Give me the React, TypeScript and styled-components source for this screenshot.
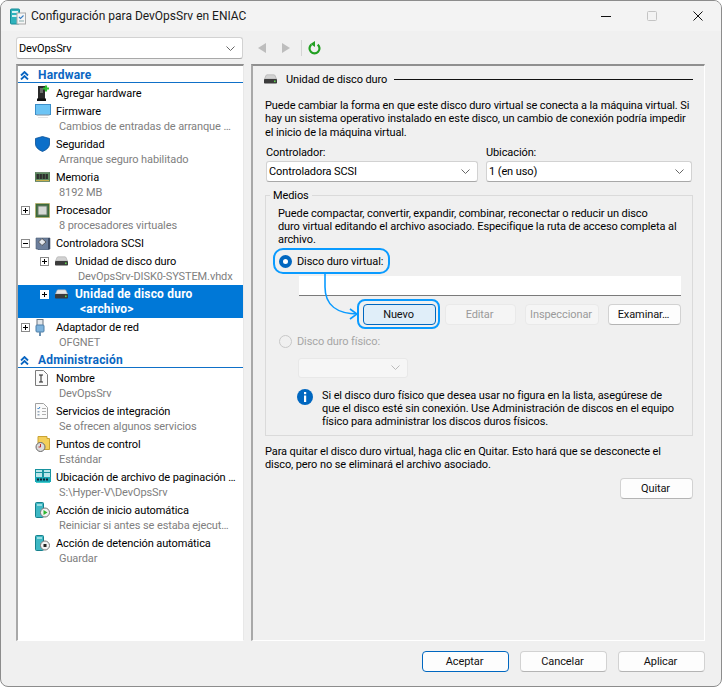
import React from "react";
import styled, { createGlobalStyle } from "styled-components";

const Global = createGlobalStyle`
  html, body { margin: 0; padding: 0; background: #fff; }
  * { box-sizing: border-box; }
  body { font-family: Roboto, "Noto Sans", sans-serif; font-size: 11px; letter-spacing: -0.1px; color: #000; }
`;

const Win = styled.div`
  width: 722px; height: 687px; background: #f0f0f0; border: 1px solid #8c8c8c;
  border-radius: 8px; overflow: hidden; display: flex; flex-direction: column;
`;
const TitleBar = styled.div`
  height: 30px; flex: none; background: #f3f3f3; display: flex; align-items: center; padding-left: 9px;
`;
const TitleText = styled.div` margin-left: 5px; font-size: 12px; letter-spacing: 0; color: #1a1a1a; white-space: nowrap; `;
const WinControls = styled.div` margin-left: auto; display: flex; align-items: center; height: 100%; `;
const WinBtn = styled.div` width: 46px; height: 100%; display: flex; align-items: center; justify-content: center; `;
const Main = styled.div`
  flex: 1; padding: 6px 16px 0 15px; display: grid;
  grid-template-columns: 228px 454px; column-gap: 7px;
  grid-template-rows: 27px 577px auto;
`;
const Combo = styled.div<{ $w?: number; $disabled?: boolean }>`
  height: ${p => p.$disabled ? 20 : 21}px; width: ${p => p.$w ? p.$w + "px" : "100%"};
  background: ${p => p.$disabled ? "#f6f6f6" : "#fff"};
  border: 1px solid ${p => p.$disabled ? "#e8e8e8" : "#d2d2d2"};
  border-bottom-color: ${p => p.$disabled ? "#e8e8e8" : "#a8a8a8"};
  border-radius: 3px; display: flex; align-items: center; justify-content: space-between;
  padding: 0 7px 0 2px; white-space: nowrap;
`;
const TopCombo = styled(Combo)` height: 22px; width: 227px; `;
const Toolbar = styled.div` height: 22px; display: flex; align-items: center; padding-left: 6px; gap: 0; `;
const ToolSep = styled.div` width: 1px; height: 16px; background: #d4d4d4; margin: 0 6px 0 9px; `;
const TreePanel = styled.div`
  background: #fff; border-top: 2px solid #8f8f8f; border-left: 2px solid #a8a8a8;
  border-right: 1px solid #e8e8e8; border-bottom: 1px solid #fff; overflow: hidden;
`;
const SectionHead = styled.div`
  height: 18px; display: flex; align-items: center; padding: 0 0 0 2px; position: relative;
  font-weight: 700; color: #0a66c2; font-size: 12px; letter-spacing: 0.2px;
  &::after { content: ""; position: absolute; left: 0; right: 0; bottom: 1px; height: 1px; background: #0f70c8; }
`;
const SectionLabel = styled.span` margin-left: 9px; `;
const Item = styled.div<{ $selected?: boolean }>`
  background: ${p => p.$selected ? "#0078d7" : "transparent"};
  color: ${p => p.$selected ? "#fff" : "#000"};
  font-weight: ${p => p.$selected ? 700 : 400};
  font-size: ${p => p.$selected ? 12 : 11}px;
  letter-spacing: ${p => p.$selected ? "0.2px" : "-0.1px"};
`;
const ItemTitle = styled.div<{ $level: number }>`
  height: 18px; display: flex; align-items: center; white-space: nowrap;
  padding-left: ${p => p.$level === 2 ? 22 : 3}px;
`;
const ExpanderSlot = styled.div` width: 14px; flex: none; display: flex; align-items: center; `;
const Expander = styled.div<{ $selected?: boolean }>`
  width: 9px; height: 9px; border: 1px solid ${p => p.$selected ? "#fff" : "#8a8a8a"};
  background: #fff; position: relative;
  &::before { content: ""; position: absolute; left: 1px; top: 3px; width: 5px; height: 1px; background: #000; }
`;
const Plus = styled(Expander)`
  &::after { content: ""; position: absolute; left: 3px; top: 1px; width: 1px; height: 5px; background: #000; }
`;
const IconSlot = styled.div` width: 21px; flex: none; display: flex; align-items: center; `;
const ItemSub = styled.div<{ $level: number; $selected?: boolean }>`
  height: 15px; line-height: 13px; white-space: nowrap;
  padding-left: ${p => p.$selected ? 62 : p.$level === 2 ? 60 : 41}px;
  color: ${p => p.$selected ? "#fff" : "#808080"};
`;
const SettingsPanel = styled.div`
  border-top: 2px solid #8f8f8f; border-left: 2px solid #a8a8a8; border-right: 1px solid #fff; border-bottom: 1px solid #fff;
  padding: 5px 11px 0 12px; height: 577px;
`;
const PanelHead = styled.div` height: 16px; display: flex; align-items: center; margin-left: -2px; `;
const PanelTitle = styled.span` margin-left: 8px; white-space: nowrap; `;
const PanelRule = styled.div` flex: 1; height: 1px; background: #111; margin-left: 7px; `;
const Para = styled.div<{ $mt?: number }>`
  line-height: 13.3px; white-space: nowrap; margin-top: ${p => p.$mt ?? 0}px;
`;
const FormRow = styled.div` display: grid; grid-template-columns: 212px 206px; column-gap: 8px; margin: 6px 0 0 1px; `;
const Field = styled.div` display: flex; flex-direction: column; `;
const FieldLabel = styled.label` height: 16px; line-height: 15px; white-space: nowrap; `;
const Media = styled.fieldset`
  margin: 7px 0 0 0; padding: 4px 11px 0 12px; border: 1px solid #dadada; height: 247px; min-width: 0;
`;
const MediaLegend = styled.legend` padding: 0 3px; margin-left: -8px; height: 14px; line-height: 14px; `;
const MediaBody = styled.div` position: relative; height: 225px; `;
const RadioRow = styled.div<{ $off?: boolean }>`
  height: 16px; display: flex; align-items: center; white-space: nowrap;
  color: ${p => p.$off ? "#a6a6a6" : "#000"};
`;
const Radio = styled.div<{ $on?: boolean }>`
  width: 13px; height: 13px; border-radius: 50%; flex: none; margin: 0 5px 0 1px;
  background: ${p => p.$on ? "#fff" : "transparent"};
  border: ${p => p.$on ? "4px solid #0067c0" : "1px solid #c8c8c8"};
`;
const PathInput = styled.div`
  height: 20px; margin: 0 0 0 21px; background: #fff; border-bottom: 1px solid #7a7a7a; 
`;
const ButtonRow = styled.div` display: flex; justify-content: flex-end; gap: 9px; margin-top: 8px; `;
const Btn = styled.div<{ $w: number; $kind?: "new" | "off" | "primary" }>`
  width: ${p => p.$w}px; height: 21px; display: flex; align-items: center; justify-content: center; border-radius: 4px;
  padding-right: 2px;
  background: ${p => p.$kind === "new" ? "#e0eef9" : p.$kind === "off" ? "#f5f5f5" : "#fdfdfd"};
  color: ${p => p.$kind === "off" ? "#9a9a9a" : "#111"};
  border: 1px solid ${p => p.$kind === "new" || p.$kind === "primary" ? "#0067c0" : p.$kind === "off" ? "#e9e9e9" : "#d2d2d2"};
  border-bottom-color: ${p => p.$kind === "new" || p.$kind === "primary" ? "#0067c0" : p.$kind === "off" ? "#e9e9e9" : "#b4b4b4"};
  white-space: nowrap;
`;
const PhysicalSelect = styled.div` margin: 8px 0 0 20px; `;
const InfoRow = styled.div` display: flex; margin: 11px 0 0 19px; align-items: flex-start; `;
const InfoIcon = styled.div` width: 25px; flex: none; `;
const RadioRing = styled.div`
  position: absolute; left: -5px; top: 41px; width: 117px; height: 26px;
  border: 2px solid #0a9bff; border-radius: 10px; pointer-events: none;
`;
const ButtonRing = styled.div`
  position: absolute; left: 79px; top: 92px; width: 83px; height: 30px;
  border: 2px solid #0a9bff; border-radius: 8px; pointer-events: none;
`;
const ArrowArt = styled.svg` position: absolute; left: 45px; top: 66px; `;
const RemoveRow = styled.div` display: flex; justify-content: flex-end; margin-top: 7px; `;
const Footer = styled.div`
  grid-column: 1 / 3; display: flex; justify-content: flex-end; gap: 11px; padding-top: 10px;
`;
const FormGap = styled.div<{ $h: number }>` height: ${p => p.$h}px; `;

const Chevron = ({ c = "#666" }: { c?: string }) => (
  <svg width="9" height="5" viewBox="0 0 9 5"><polyline points="0.5,0.5 4.5,4.5 8.5,0.5" fill="none" stroke={c} /></svg>
);
const DoubleUp = () => (
  <svg width="9" height="9" viewBox="0 0 9 9"><path d="M1 4.5 4.5 1 8 4.5M1 8.5 4.5 5 8 8.5" fill="none" stroke="#0a66c2" strokeWidth="1.8" /></svg>
);
const AppIcon = () => (
  <svg width="16" height="17" viewBox="0 0 16 17">
    <rect x="0.5" y="1" width="9" height="15" rx="1" fill="#2fb3bd" stroke="#178a96" />
    <rect x="2" y="3" width="6" height="2" fill="#d8f3f5" /><rect x="2" y="7" width="6" height="2" fill="#d8f3f5" />
    <rect x="7" y="5" width="8.5" height="11" fill="#f6f6f6" stroke="#a9a9a9" />
    <path d="M9 9l1.5 1.5L13.5 7.5" fill="none" stroke="#3a7fc4" strokeWidth="1.1" /><path d="M9 13h5" stroke="#8aa" />
  </svg>
);
const Disk = ({ light }: { light?: boolean }) => (
  <svg width="15" height="10" viewBox="0 0 15 10">
    <path d="M1.5 5 3 1.5Q3.3 .8 4 .8h7q.7 0 1 .7L13.5 5z" fill={light ? "#e6e6e6" : "#d2d2d2"} stroke="#a8a8a8" strokeWidth=".6" />
    <rect x="1" y="5" width="13" height="4.5" rx=".8" fill="#3b3b3b" /><rect x="11" y="6.5" width="1.6" height="1.6" fill="#5fd34f" />
  </svg>
);
const Add = () => (
  <svg width="16" height="17" viewBox="0 0 16 17">
    <rect x="3" y="1" width="7" height="14" fill="#2b2b2b" /><rect x="2" y="13.5" width="9" height="2.5" fill="#111" />
    <rect x="5" y="3" width="3" height="5" fill="#6a6a6a" />
    <path d="M11 0.5v6M8 3.5h6" stroke="#2fc12f" strokeWidth="2.2" />
  </svg>
);
const Monitor = () => (
  <svg width="16" height="15" viewBox="0 0 16 15">
    <rect x="0.5" y="0.5" width="15" height="10" fill="#6cc4f5" stroke="#3b8ec9" />
    <rect x="1.5" y="10.5" width="13" height="1.5" fill="#b8c4cc" /><rect x="3" y="13" width="10" height="1" fill="#e4e4e4" />
  </svg>
);
const Shield = () => (
  <svg width="15" height="16" viewBox="0 0 15 16">
    <path d="M7.5 .5 14.5 2.5V8q0 4.5-7 7.5Q.5 12.500 .5 8V2.500z" fill="#0c6fc9" stroke="#084f96" strokeWidth=".8" />
  </svg>
);
const Ram = () => (
  <svg width="15" height="10" viewBox="0 0 15 10">
    <rect x="0" y="0.5" width="15" height="9" fill="#5f8a63" stroke="#466b49" strokeWidth=".6" />
    {[1.5, 4.5, 7.5, 10.5].map(x => <rect key={x} x={x} y="2" width="2.4" height="5" fill="#2c2c2c" />)}
    <rect x="1" y="8" width="13" height="1" fill="#c8b04a" />
  </svg>
);
const Chip = () => (
  <svg width="15" height="15" viewBox="0 0 15 15">
    <rect x="0.500" y="0.500" width="14" height="14" fill="#3b6b3b" stroke="#c3a94b" strokeDasharray="1 1" />
    <rect x="3" y="3" width="9" height="9" fill="#d5d9d5" stroke="#6a7a6a" />
  </svg>
);
const Scsi = () => (
  <svg width="16" height="13" viewBox="0 0 16 13">
    <path d="M1 1h14v11h-1v1H3v-1H1z" fill="#6c7f9c" stroke="#4a5a72" strokeWidth=".6" />
    <path d="M7 1.500 11 5 7 8.500 3.500 5z" fill="#e4e8ee" stroke="#444" strokeWidth=".8" />
    <rect x="13" y="1" width="2" height="11" fill="#3e4d66" />
  </svg>
);
const Net = () => (
  <svg width="10" height="17" viewBox="0 0 10 17">
    <rect x="2" y="0.500" width="6" height="6" fill="#e2e6ea" stroke="#6a7480" />
    <rect x="1" y="6" width="8" height="7" rx="1" fill="#7fb3dc" stroke="#4f7fa8" />
    <rect x="4" y="13" width="2" height="4" fill="#6a8fb0" />
  </svg>
);
const NameDoc = () => (
  <svg width="13" height="16" viewBox="0 0 13 16">
    <path d="M.5.5h8l4 4v11H.5z" fill="#fafafa" stroke="#7a7a7a" />
    <path d="M4 5h4M4 12h4M6 5v7" stroke="#222" fill="none" />
  </svg>
);
const ChecksDoc = () => (
  <svg width="13" height="16" viewBox="0 0 13 16">
    <path d="M.5.5h8l4 4v11H.5z" fill="#fafafa" stroke="#a0a0a0" />
    <path d="M2.500 5l1 1L5 4" fill="none" stroke="#2a78c4" /><path d="M7 5.500h4M7 8.500h4M7 11.500h4" stroke="#b0b0b0" />
    <rect x="2.500" y="8" width="2" height="1.500" fill="#9ab" /><rect x="2.500" y="11" width="2" height="1.500" fill="#9ab" />
  </svg>
);
const Checkpoint = () => (
  <svg width="15" height="16" viewBox="0 0 15 16">
    <path d="M3 .5h9v2h2.500v11H3z" fill="#f4cf5a" stroke="#c9a334" />
    <circle cx="5.500" cy="11" r="4.500" fill="#dcdcdc" stroke="#6a6a6a" />
    <path d="M5.500 8v3h-2" fill="none" stroke="#c03030" />
  </svg>
);
const Paging = () => (
  <svg width="16" height="16" viewBox="0 0 16 16">
    <rect x="0.500" y="0.500" width="7" height="9" fill="#b8e6ea" stroke="#17929e" /><rect x="8.500" y="0.500" width="7" height="9" fill="#b8e6ea" stroke="#17929e" />
    <path d="M1 3.500h6M9 3.500h6" stroke="#17929e" />
    <rect x="0" y="8" width="16" height="5" fill="#18a6b4" />
    {[2, 5, 8, 11].map(x => <rect key={x} x={x} y="9.500" width="2" height="2" fill="#123" />)}
    <path d="M1 13.500h14" stroke="#4cc" />
  </svg>
);
const AutoAction = ({ stop }: { stop?: boolean }) => (
  <svg width="15" height="16" viewBox="0 0 15 16">
    <rect x="0.500" y="0.500" width="8" height="15" rx="1" fill="#3db8c4" stroke="#17808c" />
    <path d="M2 3h5" stroke="#d8f3f5" strokeWidth="1.200" />
    <circle cx="10" cy="10.500" r="4.500" fill="#f2f2f2" stroke="#777" />
    {stop ? <rect x="8.500" y="9" width="3" height="3" fill="#222" /> : <path d="M8.500 8v5l4-2.500z" fill="#2fb52f" />}
  </svg>
);
const InfoGlyph = () => (
  <svg width="16" height="16" viewBox="0 0 16 16">
    <circle cx="8" cy="8" r="8" fill="#0067c0" />
    <rect x="7" y="3" width="2.200" height="2.200" fill="#fff" /><rect x="7" y="6.500" width="2.200" height="6.500" fill="#fff" />
  </svg>
);

type Row = { level?: number; exp?: "+" | "-"; icon: React.ReactNode; title: string; sub?: string; selected?: boolean };
const hardware: Row[] = [
  { icon: <Add />, title: "Agregar hardware" },
  { icon: <Monitor />, title: "Firmware", sub: "Cambios de entradas de arranque …" },
  { icon: <Shield />, title: "Seguridad", sub: "Arranque seguro habilitado" },
  { icon: <Ram />, title: "Memoria", sub: "8192 MB" },
  { exp: "+", icon: <Chip />, title: "Procesador", sub: "8 procesadores virtuales" },
  { exp: "-", icon: <Scsi />, title: "Controladora SCSI" },
  { level: 2, exp: "+", icon: <Disk />, title: "Unidad de disco duro", sub: "DevOpsSrv-DISK0-SYSTEM.vhdx" },
  { level: 2, exp: "+", icon: <Disk light />, title: "Unidad de disco duro", sub: "<archivo>", selected: true },
  { exp: "+", icon: <Net />, title: "Adaptador de red", sub: "OFGNET" },
];
const admin: Row[] = [
  { icon: <NameDoc />, title: "Nombre", sub: "DevOpsSrv" },
  { icon: <ChecksDoc />, title: "Servicios de integración", sub: "Se ofrecen algunos servicios" },
  { icon: <Checkpoint />, title: "Puntos de control", sub: "Estándar" },
  { icon: <Paging />, title: "Ubicación de archivo de paginación …", sub: "S:\\Hyper-V\\DevOpsSrv" },
  { icon: <AutoAction />, title: "Acción de inicio automática", sub: "Reiniciar si antes se estaba ejecut…" },
  { icon: <AutoAction stop />, title: "Acción de detención automática", sub: "Guardar" },
];

const TreeRow = ({ r }: { r: Row }) => {
  const level = r.level ?? 1;
  return (
    <Item $selected={r.selected}>
      <ItemTitle $level={level}>
        <ExpanderSlot>
          {r.exp === "+" && <Plus $selected={r.selected} />}
          {r.exp === "-" && <Expander />}
        </ExpanderSlot>
        <IconSlot>{r.icon}</IconSlot>
        {r.title}
      </ItemTitle>
      {r.sub && <ItemSub $level={level} $selected={r.selected}>{r.sub}</ItemSub>}
    </Item>
  );
};

export default function App() {
  return (
    <>
      <Global />
      <Win>
        <TitleBar>
          <AppIcon />
          <TitleText>Configuración para DevOpsSrv en ENIAC</TitleText>
          <WinControls>
            <WinBtn><svg width="10" height="1"><rect width="10" height="1" fill="#111" /></svg></WinBtn>
            <WinBtn><svg width="10" height="10"><rect x=".5" y=".5" width="9" height="9" rx="1" fill="none" stroke="#c4c4c4" /></svg></WinBtn>
            <WinBtn><svg width="10" height="10"><path d="M.5.5l9 9M9.500.5l-9 9" stroke="#111" /></svg></WinBtn>
          </WinControls>
        </TitleBar>
        <Main>
          <TopCombo>DevOpsSrv<Chevron /></TopCombo>
          <Toolbar>
            <svg width="24" height="12" viewBox="0 0 24 12"><path d="M9 1v10L1 6z" fill="#bdbdbd" /></svg>
            <svg width="11" height="12" viewBox="0 0 11 12"><path d="M1 1v10l8-5z" fill="#bdbdbd" /></svg>
            <ToolSep />
            <svg width="13" height="14" viewBox="0 0 13 14">
              <path d="M3.300 3.600a5 5 0 1 0 6.400 0" fill="none" stroke="#22a022" strokeWidth="2.200" />
              <path d="M7 0v6L2.500 3z" fill="#22a022" />
            </svg>
          </Toolbar>
          <TreePanel>
            <SectionHead><DoubleUp /><SectionLabel>Hardware</SectionLabel></SectionHead>
            {hardware.map((r, i) => <TreeRow key={i} r={r} />)}
            <SectionHead><DoubleUp /><SectionLabel>Administración</SectionLabel></SectionHead>
            {admin.map((r, i) => <TreeRow key={i} r={r} />)}
          </TreePanel>
          <SettingsPanel>
            <PanelHead><Disk /><PanelTitle>Unidad de disco duro</PanelTitle><PanelRule /></PanelHead>
            <Para $mt={12}>
              Puede cambiar la forma en que este disco duro virtual se conecta a la máquina virtual. Si<br />
              hay un sistema operativo instalado en este disco, un cambio de conexión podría impedir<br />
              el inicio de la máquina virtual.
            </Para>
            <FormRow>
              <Field><FieldLabel>Controlador:</FieldLabel><Combo>Controladora SCSI<Chevron /></Combo></Field>
              <Field><FieldLabel>Ubicación:</FieldLabel><Combo>1 (en uso)<Chevron /></Combo></Field>
            </FormRow>
            <Media>
              <MediaLegend>Medios</MediaLegend>
              <MediaBody>
                <Para>
                  Puede compactar, convertir, expandir, combinar, reconectar o reducir un disco<br />
                  duro virtual editando el archivo asociado. Especifique la ruta de acceso completa al<br />
                  archivo.
                </Para>
                <FormGap $h={7} />
                <RadioRow><Radio $on />Disco duro virtual:</RadioRow>
                <FormGap $h={6} />
                <PathInput />
                <ButtonRow>
                  <Btn $w={73} $kind="new">Nuevo</Btn>
                  <Btn $w={71} $kind="off">Editar</Btn>
                  <Btn $w={74} $kind="off">Inspeccionar</Btn>
                  <Btn $w={73}>Examinar…</Btn>
                </ButtonRow>
                <FormGap $h={9} />
                <RadioRow $off><Radio />Disco duro físico:</RadioRow>
                <PhysicalSelect><Combo $w={110} $disabled>&nbsp;<Chevron c="#bbb" /></Combo></PhysicalSelect>
                <InfoRow>
                  <InfoIcon><InfoGlyph /></InfoIcon>
                  <Para>
                    Si el disco duro físico que desea usar no figura en la lista, asegúrese de<br />
                    que el disco esté sin conexión. Use Administración de discos en el equipo<br />
                    físico para administrar los discos duros físicos.
                  </Para>
                </InfoRow>
                <RadioRing />
                <ButtonRing />
                <ArrowArt width="40" height="50" viewBox="0 0 40 50">
                  <path d="M2 0v14c0 18 12 27 33 27" fill="none" stroke="#0a9bff" strokeWidth="1.600" />
                  <path d="M27 36l7 5-7 5" fill="none" stroke="#0a9bff" strokeWidth="1.600" />
                </ArrowArt>
              </MediaBody>
            </Media>
            <Para $mt={9}>
              Para quitar el disco duro virtual, haga clic en Quitar. Esto hará que se desconecte el<br />
              disco, pero no se eliminará el archivo asociado.
            </Para>
            <RemoveRow><Btn $w={73}>Quitar</Btn></RemoveRow>
          </SettingsPanel>
          <Footer>
            <Btn $w={87} $kind="primary">Aceptar</Btn>
            <Btn $w={87}>Cancelar</Btn>
            <Btn $w={87}>Aplicar</Btn>
          </Footer>
        </Main>
      </Win>
    </>
  );
}
